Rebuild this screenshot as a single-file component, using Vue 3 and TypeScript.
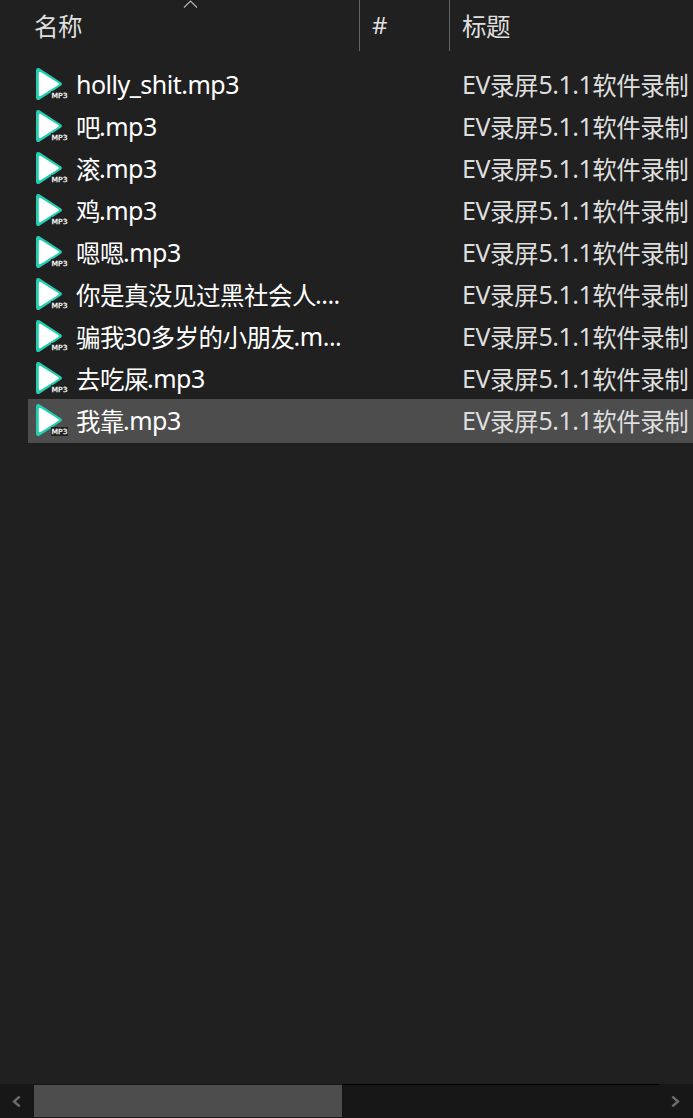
<script setup lang="ts">
interface Part {
  text: string
  latin: boolean
}
interface FileRow {
  name: string
  title: string
  selected?: boolean
}

const title = 'EV录屏5.1.1软件录制'
const files: FileRow[] = [
  { name: 'holly_shit.mp3', title },
  { name: '吧.mp3', title },
  { name: '滚.mp3', title },
  { name: '鸡.mp3', title },
  { name: '嗯嗯.mp3', title },
  { name: '你是真没见过黑社会人....', title },
  { name: '骗我30多岁的小朋友.m...', title },
  { name: '去吃屎.mp3', title },
  { name: '我靠.mp3', title, selected: true },
]

// Latin and Han runs use different faces, so each run gets its own span.
function split(text: string): Part[] {
  return (text.match(/[\x00-\x7f]+|[^\x00-\x7f]+/g) ?? []).map((run) => ({
    text: run,
    latin: /^[\x00-\x7f]/.test(run),
  }))
}
</script>

<template>
  <main class="explorer">
    <header class="head">
      <div class="cell name">
        <span class="han">名称</span>
        <svg class="sort" width="15" height="9" viewBox="0 0 15 9">
          <path d="M1 7.5 L7.5 1 L14 7.5" fill="none" stroke="#b8b8b8" stroke-width="1.1" />
        </svg>
      </div>
      <div class="cell num"><span class="hash">#</span></div>
      <div class="cell title"><span class="han">标题</span></div>
    </header>

    <ul class="list">
      <li v-for="file in files" :key="file.name" class="row" :class="{ selected: file.selected }">
        <div class="file">
          <svg class="icon" width="32" height="32" viewBox="0 0 32 32">
            <path d="M2.2 2.2 L23.6 16 L2.2 29.8 Z" fill="#24cfb1" stroke="#24cfb1" stroke-width="4.4" stroke-linejoin="round" />
            <path d="M4 5 L21.6 16 L4 27 Z" fill="#fff" stroke="#fff" stroke-width="2.4" stroke-linejoin="round" />
            <rect x="15" y="23" width="17" height="9" fill="#202020" />
            <text class="badge" x="15.5" y="30" textLength="16" lengthAdjust="spacingAndGlyphs">MP3</text>
          </svg>
          <span class="label"><span v-for="(p, i) in split(file.name)" :key="i" :class="p.latin ? 'latin' : 'han'">{{ p.text }}</span></span>
        </div>
        <div class="desc"><span v-for="(p, i) in split(file.title)" :key="i" :class="p.latin ? 'latin' : 'han'">{{ p.text }}</span></div>
      </li>
    </ul>

    <footer class="scroll">
      <div class="arrow left">
        <svg width="9" height="11" viewBox="0 0 9 11"><path d="M7.7 0.5 L2 5.5 L7.7 10.5" fill="none" stroke="#6b6b6b" stroke-width="2.4" /></svg>
      </div>
      <div class="thumb"></div>
      <div class="track"></div>
      <div class="arrow right">
        <svg width="9" height="11" viewBox="0 0 9 11"><path d="M1.3 0.5 L7 5.5 L1.3 10.5" fill="none" stroke="#6b6b6b" stroke-width="2.4" /></svg>
      </div>
    </footer>
  </main>
</template>

<style>
body {
  background: #202020;
}
</style>

<style scoped>
.explorer {
  display: flex;
  flex-direction: column;
  width: 693px;
  height: 1118px;
  overflow: hidden;
  background: #202020;
  color: #dedede;
  font-family: "Noto Sans", "Noto Sans CJK SC", sans-serif;
  font-size: 24px;
  white-space: nowrap;
}
.han {
  font-family: "Noto Sans CJK SC", sans-serif;
  font-size: 24.5px;
  letter-spacing: -0.5px;
  line-height: 1;
  vertical-align: -1px;
}
.latin {
  font-size: 25px;
  letter-spacing: -0.5px;
  line-height: 1;
}
.label .han + .latin {
  margin-left: -1px;
}
.desc .han + .latin {
  margin-left: 0.5px;
}
.head {
  display: flex;
  height: 51px;
  flex: none;
}
.cell {
  box-sizing: border-box;
  height: 51px;
  line-height: 52px;
}
.cell.name {
  position: relative;
  width: 360px;
  padding-left: 34px;
  border-right: 1px solid #636363;
}
.cell.num {
  width: 90px;
  padding-left: 12px;
  border-right: 1px solid #636363;
  line-height: 50px;
}
.cell.title {
  padding-left: 12px;
}
.sort {
  position: absolute;
  left: 183px;
  top: 0;
}
.list {
  flex: 1;
  margin: 0;
  padding: 13px 0 0 28px;
  list-style: none;
}
.row {
  display: flex;
  height: 42px;
  line-height: 42px;
}
.row.selected {
  background: #4d4d4d;
  box-shadow: 0 -1px #4d4d4d, 0 1px #4d4d4d;
}
.file {
  display: flex;
  width: 434px;
  flex: none;
  color: #fff;
}
.icon {
  flex: none;
  margin: 4px 8px 0;
}
.badge {
  fill: #fff;
  stroke: #fff;
  stroke-width: 0.25px;
  font: 7px "DejaVu Sans", sans-serif;
}
.scroll {
  display: flex;
  box-sizing: border-box;
  height: 34px;
  flex: none;
  background: #171717;
}
.arrow {
  display: flex;
  box-sizing: border-box;
  width: 34px;
  padding-right: 2px;
  align-items: center;
  justify-content: center;
}
.thumb {
  width: 308px;
  height: 32px;
  margin-top: 1px;
  background: #4d4d4d;
}
.track {
  width: 317px;
  border-top: 1px solid #000;
  box-sizing: border-box;
}
</style>
